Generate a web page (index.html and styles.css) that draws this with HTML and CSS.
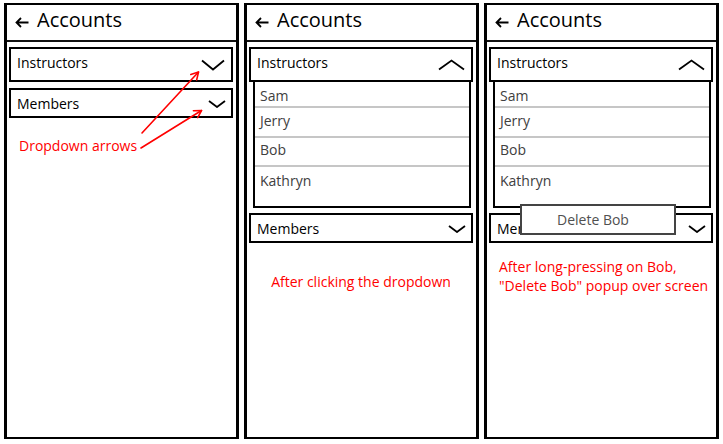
FILE: index.html
```html
<!DOCTYPE html>
<html lang="en">
<head>
<meta charset="utf-8">
<title>Accounts mockups</title>
<link rel="stylesheet" href="styles.css">
</head>
<body>
<div class="board">

  <section class="panel">
    <header class="bar">
      <svg class="back" width="14" height="11" viewBox="0 0 14 11"><path d="M1.5 5.5H13.5M6 1L1.5 5.5L6 10" fill="none" stroke="#000" stroke-width="1.8"/></svg>
      <h1 class="title">Accounts</h1>
    </header>
    <div class="content">
      <div class="dd">
        <div class="dd-head tall"><span class="label">Instructors</span><svg class="chev" width="24" height="12" viewBox="0 0 24 12"><polyline points="1,1.5 12,10.5 23,1.5" fill="none" stroke="#000" stroke-width="1.8"/></svg></div>
      </div>
      <div class="dd">
        <div class="dd-head"><span class="label">Members</span><svg class="chev chev-sm" width="18" height="8" viewBox="0 0 18 8"><polyline points="1,1 9,7 17,1" fill="none" stroke="#000" stroke-width="1.8"/></svg></div>
      </div>
      <p class="note note-first">Dropdown arrows</p>
    </div>
  </section>

  <section class="panel">
    <header class="bar">
      <svg class="back" width="14" height="11" viewBox="0 0 14 11"><path d="M1.5 5.5H13.5M6 1L1.5 5.5L6 10" fill="none" stroke="#000" stroke-width="1.8"/></svg>
      <h1 class="title">Accounts</h1>
    </header>
    <div class="content">
      <div class="dd open">
        <div class="dd-head tall"><span class="label">Instructors</span><svg class="chev" width="27" height="12" viewBox="0 0 27 12"><polyline points="1,10.5 13.5,1.5 26,10.5" fill="none" stroke="#000" stroke-width="1.8"/></svg></div>
        <ul class="list">
          <li class="row">Sam</li>
          <li class="row">Jerry</li>
          <li class="row">Bob</li>
          <li class="row">Kathryn</li>
        </ul>
      </div>
      <div class="dd">
        <div class="dd-head"><span class="label">Members</span><svg class="chev chev-sm" width="18" height="8" viewBox="0 0 18 8"><polyline points="1,1 9,7 17,1" fill="none" stroke="#000" stroke-width="1.8"/></svg></div>
      </div>
      <p class="note note-center">After clicking the dropdown</p>
    </div>
  </section>

  <section class="panel">
    <header class="bar">
      <svg class="back" width="14" height="11" viewBox="0 0 14 11"><path d="M1.5 5.5H13.5M6 1L1.5 5.5L6 10" fill="none" stroke="#000" stroke-width="1.8"/></svg>
      <h1 class="title">Accounts</h1>
    </header>
    <div class="content">
      <div class="dd open">
        <div class="dd-head tall"><span class="label">Instructors</span><svg class="chev" width="27" height="12" viewBox="0 0 27 12"><polyline points="1,10.5 13.5,1.5 26,10.5" fill="none" stroke="#000" stroke-width="1.8"/></svg></div>
        <ul class="list">
          <li class="row">Sam</li>
          <li class="row">Jerry</li>
          <li class="row">Bob</li>
          <li class="row">Kathryn</li>
        </ul>
      </div>
      <div class="dd">
        <div class="dd-head"><span class="label">Members</span><svg class="chev chev-sm" width="18" height="8" viewBox="0 0 18 8"><polyline points="1,1 9,7 17,1" fill="none" stroke="#000" stroke-width="1.8"/></svg></div>
      </div>
      <p class="note note-left">After long-pressing on Bob,<br>"Delete Bob" popup over screen</p>
    </div>
    <div class="popup">Delete Bob</div>
  </section>

  <svg class="annot" width="723" height="444" viewBox="0 0 723 444">
    <g fill="none" stroke="#ff0000" stroke-width="1.6" stroke-linecap="round" stroke-linejoin="round">
      <line x1="142" y1="133" x2="198.5" y2="72"/>
      <polyline points="190.8,74.4 198.5,72 196.7,79.9"/>
      <line x1="141" y1="148" x2="201.5" y2="110.5"/>
      <polyline points="193.4,110.8 201.5,110.5 197.7,117.6"/>
    </g>
  </svg>
</div>
</body>
</html>
```

FILE: styles.css
```css
html, body {
  margin: 0;
  padding: 0;
  background: #fff;
}

body {
  font-family: "Open Sans", "Noto Sans", "Liberation Sans", sans-serif;
  color: #000;
}

.board {
  position: relative;
  display: flex;
  gap: 5px;
  padding: 3px 0 0 4px;
  width: 723px;
  height: 444px;
  box-sizing: border-box;
}

.panel {
  position: relative;
  width: 235px;
  height: 436px;
  box-sizing: border-box;
  border-style: solid;
  border-color: #000;
  border-width: 2px 3px;
  flex: none;
}

.bar {
  display: flex;
  align-items: center;
  height: 37px;
  box-sizing: border-box;
  border-bottom: 2px solid #111;
  padding-left: 8px;
}

.back {
  flex: none;
  margin-right: 8px;
}

.title {
  margin: 0 0 7px 0;
  font-size: 20px;
  line-height: 27px;
  font-weight: 400;
}

.content {
  padding: 5px 3px 0 2px;
}

.dd + .dd {
  margin-top: 6px;
}

.dd.open + .dd {
  margin-top: 5px;
}

.dd-head {
  display: flex;
  align-items: center;
  justify-content: space-between;
  height: 30px;
  box-sizing: border-box;
  border: 2px solid #000;
  padding: 0 6px;
}

.dd-head.tall {
  height: 35px;
}

.label {
  font-size: 14px;
  line-height: 19px;
}

.dd-head.tall .label {
  margin-bottom: 4px;
}

.chev {
  flex: none;
  display: block;
}

.chev-sm {
  margin-right: -1px;
  margin-top: 2px;
}

.list {
  list-style: none;
  margin: 0 2px 0 4px;
  padding: 0;
  border: 2px solid #000;
  border-top: 0;
}

.row {
  box-sizing: border-box;
  padding-left: 5px;
  font-size: 14px;
  line-height: 19px;
  color: #404040;
  border-bottom: 2px solid #c6c6c6;
}

.row:nth-child(1) { height: 26px; padding-top: 4px; }
.row:nth-child(2) { height: 30px; padding-top: 3px; }
.row:nth-child(3) { height: 29px; padding-top: 2px; }
.row:nth-child(4) { height: 39px; padding-top: 4px; border-bottom: 0; }

.note {
  margin: 0;
  font-size: 14px;
  line-height: 18.5px;
  color: #ff0000;
  white-space: nowrap;
}

.note-first {
  margin-top: 19px;
  padding-left: 10px;
}

.panel .note-center {
  margin-top: 30px;
  text-align: center;
}

.dd.open + .dd + .note-left {
  margin-top: 15px;
  padding-left: 10px;
}

.popup {
  position: absolute;
  left: 33px;
  top: 199px;
  width: 156px;
  height: 31px;
  box-sizing: border-box;
  border: 2px solid #444;
  background: #fff;
  padding-left: 35px;
  font-size: 14px;
  line-height: 27px;
  color: #505050;
}

.annot {
  position: absolute;
  left: 0;
  top: 0;
  pointer-events: none;
}
```
